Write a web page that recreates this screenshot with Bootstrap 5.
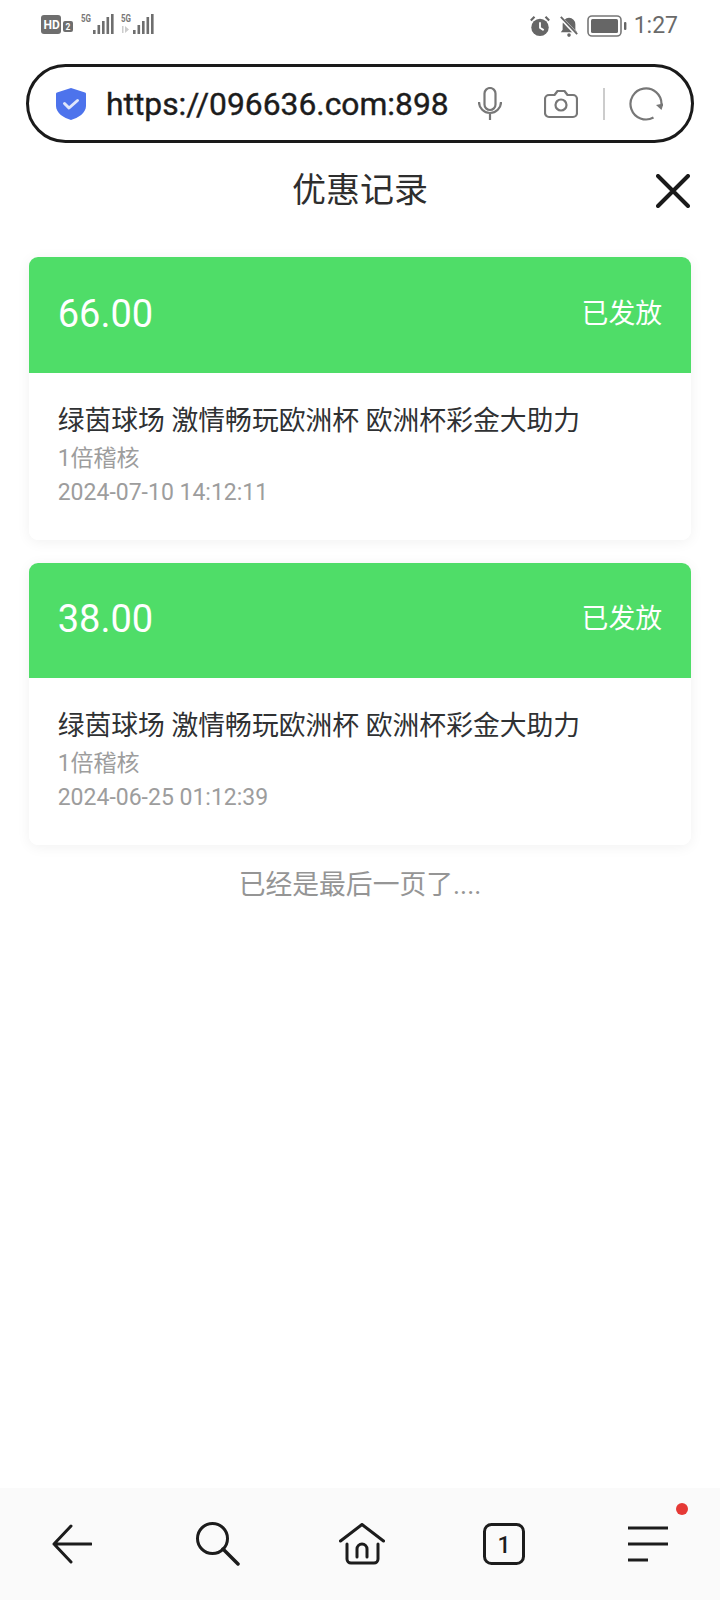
<!DOCTYPE html>
<html lang="zh">
<head>
<meta charset="utf-8">
<title>优惠记录</title>
<link href="https://cdn.jsdelivr.net/npm/bootstrap@5.3.0/dist/css/bootstrap.min.css" rel="stylesheet">
<style>
html,body{height:1600px;margin:0;background:#fff;}
body{font-family:Roboto,"Noto Sans CJK SC",sans-serif;color:#2f3133;overflow:hidden;}
.app{height:1600px;width:720px;}
.statusbar{height:50px;padding:10px 42px 0 41px;color:#666;}
.status-right{margin-top:1px;}
.statusbar .clock{font-size:23px;line-height:30px;color:#6a6a6a;margin-left:-1px;}
.urlbar{height:79px;margin:14px 26px 0 26px;border:3px solid #1a1a1a;border-radius:40px;padding:0 0 0 26px;}
.urltext{font-size:31.8px;font-weight:400;-webkit-text-stroke:.4px #1c1c1c;color:#1c1c1c;width:345px;white-space:nowrap;margin-left:19px;line-height:40px;}
.vsep{width:2px;height:32px;background:#ccc;margin-left:25px;}
.ic-mic{margin-left:27px;}
.ic-cam{margin-left:42px;}
.ic-rel{margin-left:24px;}
.titlebar{height:94px;padding:0 26px;position:relative;}
.titlebar h1{font-size:34px;font-weight:400;margin:0;color:#2e2e2e;line-height:94px;}
.closebtn{position:absolute;right:30px;top:31px;line-height:0;}
.recs{padding:20px 29px 0;}
.rec{border:0;border-radius:9px;box-shadow:0 2px 14px rgba(0,0,0,.06);margin-bottom:23px;overflow:hidden;}
.rec-top{background:#4fdd68;color:#fff;height:115.5px;padding:0 29px 2px 28.7px;}
.rec-amt{font-size:38px;line-height:44px;}
.rec-state{font-size:26.8px;line-height:32px;}
.rec-body{background:#fff;height:167px;padding:28px 29px 0 28.7px;}
.rec-name{font-size:26.8px;line-height:40px;color:#2f3133;white-space:nowrap;margin-bottom:1px;}
.rec-sub{font-size:23px;line-height:34px;color:#9d9d9d;white-space:nowrap;}
.endnote{font-size:26.8px;line-height:34px;color:#959595;text-align:center;margin-top:8px;}
.tabbar{height:112px;background:#fafafa;padding:0 34px;}
.tabbar .slot{width:76px;display:flex;justify-content:center;position:relative;}
.nudge-s{margin-left:5px;}
.nudge-h{margin-left:4px;}
.reddot{position:absolute;width:12px;height:12px;background:#e53935;border-radius:50%;top:-22px;right:-2px;}
</style>
</head>
<body>
<div class="app d-flex flex-column">
  <div class="statusbar d-flex justify-content-between align-items-start">
    <svg width="114" height="26" viewBox="0 0 114 26" fill="#6e6e6e">
      <rect x="0" y="5" width="20" height="19" rx="3"/>
      <text x="2.6" y="19" font-family="Roboto,sans-serif" font-size="12" font-weight="700" fill="#fff">HD</text>
      <rect x="22" y="11" width="10" height="11" rx="2"/>
      <text x="24.5" y="20" font-family="Roboto,sans-serif" font-size="8.5" font-weight="700" fill="#fff">2</text>
      <text x="40" y="12" font-family="Roboto,sans-serif" font-size="10" font-weight="700" fill="#777" textLength="10" lengthAdjust="spacingAndGlyphs">5G</text>
      <rect x="52" y="20" width="2.6" height="4"/><rect x="56.5" y="15" width="2.6" height="9"/><rect x="61" y="11" width="2.6" height="13"/><rect x="65.5" y="7" width="2.6" height="17"/><rect x="70" y="4" width="2.6" height="20"/>
      <text x="80" y="12" font-family="Roboto,sans-serif" font-size="10" font-weight="700" fill="#777" textLength="10" lengthAdjust="spacingAndGlyphs">5G</text>
      <path d="M81 16v7h1.5v-7zM84 16v7l4-3.5z" fill="#ccc"/>
      <rect x="92" y="20" width="2.6" height="4"/><rect x="96.5" y="15" width="2.6" height="9"/><rect x="101" y="11" width="2.6" height="13"/><rect x="105.5" y="7" width="2.6" height="17"/><rect x="110" y="4" width="2.6" height="20"/>
    </svg>
    <div class="status-right d-flex align-items-center gap-2">
      <svg width="22" height="22" viewBox="0 0 24 24" fill="#666"><circle cx="12" cy="13.5" r="9.5"/><path d="M12 8v6l4 2.5" stroke="#fff" stroke-width="2" fill="none"/><path d="M2 6l4-4M22 6l-4-4" stroke="#666" stroke-width="2.4"/></svg>
      <svg width="20" height="22" viewBox="0 0 22 24" fill="#666"><path d="M11 3a7 7 0 0 0-7 7v6l-2 3h18l-2-3v-6a7 7 0 0 0-7-7z"/><circle cx="11" cy="22" r="2"/><path d="M1 2l19 20" stroke="#fff" stroke-width="4"/><path d="M2 2l18 19" stroke="#666" stroke-width="2"/></svg>
      <svg width="40" height="22" viewBox="0 0 40 22"><rect x="1" y="1" width="33" height="20" rx="4" fill="none" stroke="#777" stroke-width="1.6"/><rect x="4" y="4" width="27" height="14" rx="1.5" fill="#666"/><rect x="37" y="7" width="2.4" height="8" rx="1" fill="#666"/></svg>
      <span class="clock">1:27</span>
    </div>
  </div>

  <div class="urlbar d-flex align-items-center">
    <svg width="32" height="34" viewBox="0 0 32 34" class="flex-shrink-0"><path d="M16 1 L30 5.5 a1.5 1.5 0 0 1 1 1.5 V19 C31 26 23 31 16 33 C9 31 1 26 1 19 V7 a1.5 1.5 0 0 1 1-1.5z" fill="#4d73ec"/><path d="M9.5 16.5l4.5 4.5 8.5-7.5" stroke="#dfe6fb" stroke-width="3" fill="none" stroke-linecap="round" stroke-linejoin="round"/></svg>
    <div class="urltext">https://096636.com:898</div>
    <svg class="ic-mic flex-shrink-0" width="24" height="34" viewBox="0 0 24 34" fill="none" stroke="#777" stroke-width="2.2"><rect x="6.5" y="1" width="11" height="22" rx="5.5"/><path d="M1 15a11 11 0 0 0 22 0M12 26v7"/></svg>
    <svg class="ic-cam flex-shrink-0" width="34" height="30" viewBox="0 0 34 30" fill="none" stroke="#777" stroke-width="2.2" stroke-linejoin="round"><path d="M5 6h5.5l3-4h7l3 4H29a4 4 0 0 1 4 4v14a4 4 0 0 1-4 4H5a4 4 0 0 1-4-4V10a4 4 0 0 1 4-4z"/><circle cx="17" cy="16" r="5.5"/></svg>
    <div class="vsep flex-shrink-0"></div>
    <svg class="ic-rel flex-shrink-0" width="34" height="34" viewBox="0 0 34 34" fill="none" stroke="#777" stroke-width="2.2"><path d="M24.5 30.5A15.5 15.5 0 1 1 32.5 17"/><path d="M27 18l5.500 5 2-6.500z" fill="#777" stroke="none"/></svg>
  </div>

  <div class="titlebar text-center">
    <h1>优惠记录</h1>
    <span class="closebtn"><svg width="34" height="34" viewBox="0 0 34 34" stroke="#1a1a1a" stroke-width="4" stroke-linecap="round"><path d="M2 2l30 30M32 2L2 32"/></svg></span>
  </div>

  <div class="recs flex-grow-1">
    <div class="card rec">
      <div class="rec-top d-flex justify-content-between align-items-center">
        <span class="rec-amt">66.00</span><span class="rec-state">已发放</span>
      </div>
      <div class="rec-body">
        <div class="rec-name">绿茵球场 激情畅玩欧洲杯 欧洲杯彩金大助力</div>
        <div class="rec-sub">1倍稽核</div>
        <div class="rec-sub">2024-07-10 14:12:11</div>
      </div>
    </div>
    <div class="card rec">
      <div class="rec-top d-flex justify-content-between align-items-center">
        <span class="rec-amt">38.00</span><span class="rec-state">已发放</span>
      </div>
      <div class="rec-body">
        <div class="rec-name">绿茵球场 激情畅玩欧洲杯 欧洲杯彩金大助力</div>
        <div class="rec-sub">1倍稽核</div>
        <div class="rec-sub">2024-06-25 01:12:39</div>
      </div>
    </div>
    <div class="endnote">已经是最后一页了....</div>
  </div>

  <div class="tabbar d-flex justify-content-between align-items-center">
    <div class="slot"><svg width="40" height="40" viewBox="0 0 40 40" fill="none" stroke="#1c1c1c" stroke-width="3" stroke-linecap="round" stroke-linejoin="round"><path d="M19 2L2 20l17 18M2 20h37"/></svg></div>
    <div class="slot"><svg class="nudge-s" width="45" height="44" viewBox="0 0 45 44" fill="none" stroke="#1c1c1c" stroke-width="3" stroke-linecap="round"><circle cx="16.5" cy="16.5" r="15"/><path d="M27 27l15 15" stroke-width="3.500"/></svg></div>
    <div class="slot"><svg class="nudge-h" width="46" height="42" viewBox="0 0 46 42" fill="none" stroke="#1c1c1c" stroke-width="3" stroke-linecap="round" stroke-linejoin="round"><path d="M1.500 18L23 1.500 44.500 18"/><path d="M8 21v15a4 4 0 0 0 4 4h23a4 4 0 0 0 4-4V21"/><path d="M18 34v-8a5 5 0 0 1 10 0v8"/></svg></div>
    <div class="slot"><svg width="42" height="42" viewBox="0 0 42 42" fill="none"><rect x="1.5" y="1.5" width="39" height="39" rx="7" stroke="#1c1c1c" stroke-width="3"/><text x="21" y="30" font-family="Roboto,sans-serif" font-size="23" font-weight="500" text-anchor="middle" fill="#1c1c1c">1</text></svg></div>
    <div class="slot"><svg width="42" height="38" viewBox="0 0 42 38" stroke="#1c1c1c" stroke-width="3"><path d="M1 3h40M1 19h40M1 35h20"/></svg><span class="reddot"></span></div>
  </div>
</div>
</body>
</html>
